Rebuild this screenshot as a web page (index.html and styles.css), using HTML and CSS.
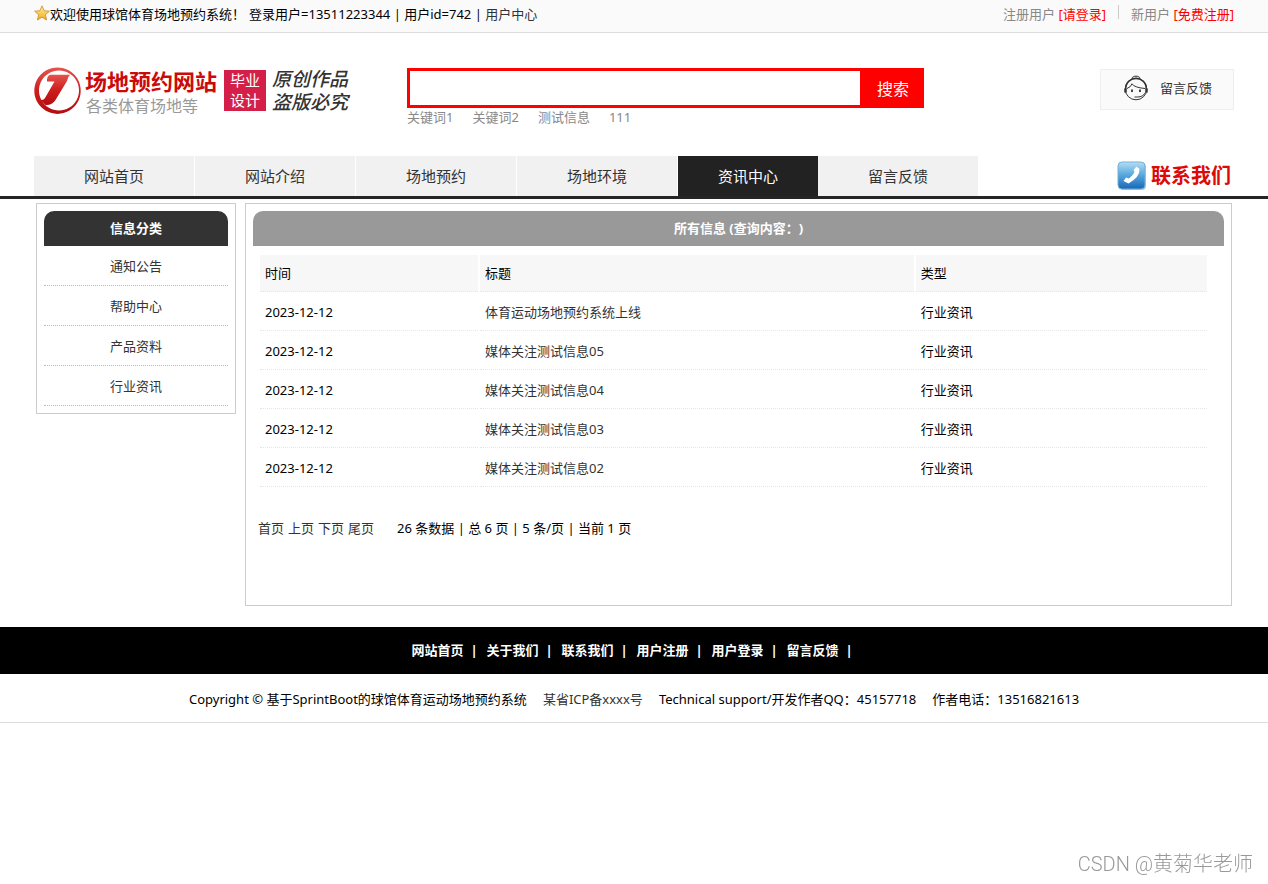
FILE: index.html
```html
<!DOCTYPE html>
<html lang="zh-CN">
<head>
<meta charset="utf-8">
<title>场地预约网站</title>
<link rel="stylesheet" href="styles.css">
</head>
<body>
<div class="topbar">
  <div class="wrap topbar-inner">
    <div class="welcome">
      <svg class="star" viewBox="0 0 16 16" aria-hidden="true">
        <defs><linearGradient id="gold" x1="0" y1="0" x2="0" y2="1"><stop offset="0" stop-color="#fff3a0"/><stop offset="1" stop-color="#f5a81c"/></linearGradient></defs>
        <path d="M8 .8l2.1 4.900 5.300.5-4 3.500 1.200 5.300L8 12.200 3.400 15l1.200-5.300-4-3.500 5.300-.5z" fill="url(#gold)" stroke="#c98a2b" stroke-width=".8" stroke-linejoin="round"/>
      </svg>
      <span class="greeting">欢迎使用球馆体育场地预约系统！</span>
      <span>登录用户=13511223344 | 用户id=742 | <a href="#">用户中心</a></span>
    </div>
    <div class="account">
      <span>注册用户 <a href="#">[请登录]</a></span>
      <span class="account-new">新用户 <a href="#">[免费注册]</a></span>
    </div>
  </div>
</div>

<header class="wrap header">
  <div class="logo">
    <svg class="logo-mark" viewBox="0 0 48 48" aria-hidden="true">
      <defs><linearGradient id="red" x1="0" y1="0" x2="0" y2="1"><stop offset="0" stop-color="#e4554e"/><stop offset=".5" stop-color="#cf1d1d"/><stop offset="1" stop-color="#b30d10"/></linearGradient></defs>
      <path fill="url(#red)" fill-rule="evenodd" d="M23.500.5a23.200 23.200 0 1 0 .01 0zM25 3.500a20 20 0 1 1-.01 0z"/>
      <path fill="url(#red)" d="M13 12.500Q13.500 7.700 17 7.700H36Q33.500 10 33 14L21.500 33Q18 38.500 11.500 38L6 32.500Q9 34 11 31L20.500 14.500H13z"/>
    </svg>
    <div class="logo-name">
      <strong>场地预约网站</strong>
      <span>各类体育场地等</span>
    </div>
    <div class="logo-stamp">毕业<br>设计</div>
    <div class="logo-script"><span>原创作品</span><span>盗版必究</span></div>
  </div>
  <form class="search">
    <div class="search-row">
      <input type="text" aria-label="搜索内容">
      <button type="button">搜索</button>
    </div>
    <div class="keywords"><a href="#">关键词1</a><a href="#">关键词2</a><a href="#">测试信息</a><a href="#">111</a></div>
  </form>
  <a class="feedback" href="#">
    <svg viewBox="0 0 24 26" fill="none" stroke="#333" aria-hidden="true">
      <path d="M8 3.500C8.500.3 15.500.3 16 3.500" fill="#ccc"/>
      <circle cx="12" cy="14" r="10.800"/>
      <path d="M1.700 14C1.700 0 22.300 0 22.300 14" stroke-width="1.500"/>
      <path d="M3 13.500Q7 12 8 8.800Q10 12.500 21 13.500"/>
      <path d="M1.500 13.500v4M22.500 13.500v4" stroke-width="2.500"/>
      <path d="M8 14.500v2.500M16 14.500v2.500" stroke-width="1.800"/>
      <path d="M21.500 17.500Q19 22 13.500 22M10.500 22h3"/>
    </svg>
    <span>留言反馈</span>
  </a>
</header>

<div class="navbar">
  <div class="wrap navbar-inner">
    <nav class="nav">
      <a href="#">网站首页</a><a href="#">网站介绍</a><a href="#">场地预约</a><a href="#">场地环境</a><a class="active" href="#">资讯中心</a><a href="#">留言反馈</a>
    </nav>
    <a class="contact" href="#">
      <svg viewBox="0 0 30 30" aria-hidden="true">
        <defs><linearGradient id="blue" x1="0" y1="0" x2="0" y2="1"><stop offset="0" stop-color="#b5ddf3"/><stop offset=".45" stop-color="#5cabdf"/><stop offset="1" stop-color="#1767b8"/></linearGradient></defs>
        <rect x="2" y="2" width="27" height="27" rx="4" fill="#bccbdc"/>
        <rect x="1" y="1" width="27" height="27" rx="4" fill="url(#blue)" stroke="#75afd6"/>
        <path d="M19.500 5.500l3 2.500q.5 8-11 14.500l-5-2.500 2.500-3.500 3 1q4-3 5.500-6.500l-1-2z" fill="#fff"/>
      </svg>
      <span>联系我们</span>
    </a>
  </div>
</div>

<main class="wrap content">
  <aside class="panel">
    <h2 class="panel-title dark">信息分类</h2>
    <ul class="categories">
      <li><a href="#">通知公告</a></li>
      <li><a href="#">帮助中心</a></li>
      <li><a href="#">产品资料</a></li>
      <li><a href="#">行业资讯</a></li>
    </ul>
  </aside>
  <section class="panel list">
    <h2 class="panel-title">所有信息 (查询内容：)</h2>
    <table class="news">
      <thead><tr><th class="col-date">时间</th><th class="col-title">标题</th><th>类型</th></tr></thead>
      <tbody>
        <tr><td>2023-12-12</td><td><a href="#">体育运动场地预约系统上线</a></td><td>行业资讯</td></tr>
        <tr><td>2023-12-12</td><td><a href="#">媒体关注测试信息05</a></td><td>行业资讯</td></tr>
        <tr><td>2023-12-12</td><td><a href="#">媒体关注测试信息04</a></td><td>行业资讯</td></tr>
        <tr><td>2023-12-12</td><td><a href="#">媒体关注测试信息03</a></td><td>行业资讯</td></tr>
        <tr><td>2023-12-12</td><td><a href="#">媒体关注测试信息02</a></td><td>行业资讯</td></tr>
      </tbody>
    </table>
    <div class="pager">
      <span class="pager-links"><a href="#">首页</a><a href="#">上页</a><a href="#">下页</a><a href="#">尾页</a></span>
      <span>26 条数据 | 总 6 页 | 5 条/页 | 当前 1 页</span>
    </div>
  </section>
</main>

<footer>
  <div class="footer-nav">
    <a href="#">网站首页</a><i>|</i><a href="#">关于我们</a><i>|</i><a href="#">联系我们</a><i>|</i><a href="#">用户注册</a><i>|</i><a href="#">用户登录</a><i>|</i><a href="#">留言反馈</a><i>|</i>
  </div>
  <div class="copyright">
    <span>Copyright © 基于SprintBoot的球馆体育运动场地预约系统</span>
    <a href="#">某省ICP备xxxx号</a>
    <span>Technical support/开发作者QQ：45157718</span>
    <span>作者电话：13516821613</span>
  </div>
</footer>
<div class="watermark">CSDN @黄菊华老师</div>
</body>
</html>
```
FILE: styles.css
```css
* { box-sizing: border-box; }
body {
  margin: 0;
  min-height: 100vh;
  background: #fff;
  color: #000;
  font: 13px/20px "Noto Sans", "Noto Sans CJK SC", sans-serif;
  text-spacing-trim: space-all;
}
a { color: #333; text-decoration: none; }
.wrap { max-width: 1200px; margin: 0 auto; }

.topbar { background: #fafafa; border-bottom: 1px solid #ddd; }
.topbar-inner { display: flex; justify-content: space-between; height: 32px; padding-top: 4px; }
.welcome { display: flex; }
.star { width: 16px; height: 16px; margin-top: 1px; }
.greeting { margin-right: 4px; }
.account { display: flex; color: #888; }
.account a { color: #f00; }
.account-new { position: relative; margin-left: 25px; }
.account-new::before {
  content: "";
  position: absolute;
  left: -13px;
  top: 1px;
  height: 14px;
  border-left: 1px solid #ccc;
}

.header { display: flex; height: 123px; align-items: flex-start; }
.logo { display: flex; width: 373px; padding-top: 33px; }
.logo-mark { width: 48px; height: 48px; margin: 1px 3px 0 0; }
.logo-name { width: 139px; white-space: nowrap; }
.logo-name strong { display: block; color: #cb0b0b; font-size: 22px; line-height: 30px; }
.logo-name span { display: block; padding-left: 1px; color: #999; font-size: 16px; line-height: 20px; }
.logo-stamp {
  width: 42px;
  height: 41px;
  margin: 4px 6px 0 0;
  background: #d42049;
  color: #fff;
  font-size: 15px;
  line-height: 20px;
  text-align: center;
}
.logo-script {
  display: grid;
  align-content: start;
  margin-top: 2px;
  color: #333;
  font-size: 19px;
  font-style: italic;
  font-weight: 500;
  line-height: 23px;
}
.search { width: 517px; padding-top: 35px; }
.search-row { display: flex; height: 40px; }
.search-row input {
  flex: 1;
  min-width: 0;
  padding: 0 8px;
  border: 3px solid #f00;
  border-right: 0;
  outline: 0;
  font: inherit;
}
.search-row button {
  width: 64px;
  padding: 2px 0 0 2px;
  border: 0;
  background: #f00;
  color: #fff;
  font: inherit;
  font-size: 16px;
}
.keywords { display: flex; gap: 19px; line-height: 18px; }
.keywords a { color: #888; }
.feedback {
  display: flex;
  align-items: center;
  gap: 12px;
  width: 134px;
  height: 41px;
  margin: 36px 0 0 auto;
  padding: 0 0 4px 23px;
  border: 1px solid #eee;
  background: #fafafa;
}
.feedback svg { width: 24px; height: 26px; }

.navbar { border-bottom: 3px solid #262424; }
.navbar-inner { display: flex; justify-content: space-between; height: 40px; }
.nav { display: flex; gap: 1px; }
.nav a {
  width: 160px;
  background: #f1f1f1;
  font-size: 15px;
  line-height: 40px;
  text-align: center;
}
.nav .active { width: 140px; margin-right: -1px; background: #222; color: #fff; }
.contact {
  display: flex;
  align-items: center;
  gap: 4px;
  padding-right: 3px;
  color: #dc0909;
  font-size: 20px;
  font-weight: 700;
}
.contact svg { width: 30px; height: 30px; }

.content {
  display: grid;
  grid-template-columns: 200px 1fr;
  gap: 9px;
  align-items: start;
  padding: 4px 2px 21px;
}
.panel { padding: 7px; border: 1px solid #ccc; }
.panel-title {
  margin: 0;
  border-radius: 10px 10px 0 0;
  background: #999;
  color: #fff;
  font-size: 13px;
  line-height: 35px;
  text-align: center;
}
.panel-title.dark { background: #333; }
.categories { margin: 0; padding: 0; list-style: none; text-align: center; }
.categories li { height: 40px; border-bottom: 1px dotted #bbb; line-height: 41px; }
.list { min-height: 403px; }
.news {
  width: calc(100% - 20px);
  margin: 7px 15px 0 5px;
  table-layout: fixed;
  border-spacing: 2px;
}
.news th, .news td {
  height: 37px;
  padding: 0 5px;
  border-bottom: 1px dotted #e6e6e6;
  font-weight: 400;
  text-align: left;
}
.news th { background: #f7f7f7; }
.news .col-date { width: 218px; }
.news .col-title { width: 46%; }
.pager { display: flex; gap: 23px; padding: 29px 5px 0; }
.pager-links { display: flex; gap: 4px; }

.footer-nav {
  display: flex;
  justify-content: center;
  height: 47px;
  padding-left: 5px;
  background: #000;
  color: #fff;
  font-weight: 700;
  line-height: 47px;
}
.footer-nav a { color: #fff; }
.footer-nav i { width: 23px; font-style: normal; padding-left: 7px; }
.copyright {
  display: flex;
  justify-content: center;
  gap: 16px;
  height: 49px;
  border-bottom: 1px solid #ddd;
  line-height: 50px;
}
.watermark {
  position: fixed;
  right: 15px;
  bottom: 5px;
  color: #999;
  font: 20px/30px Roboto, "Noto Sans CJK SC", sans-serif;
  font-weight: 300;
}
```
